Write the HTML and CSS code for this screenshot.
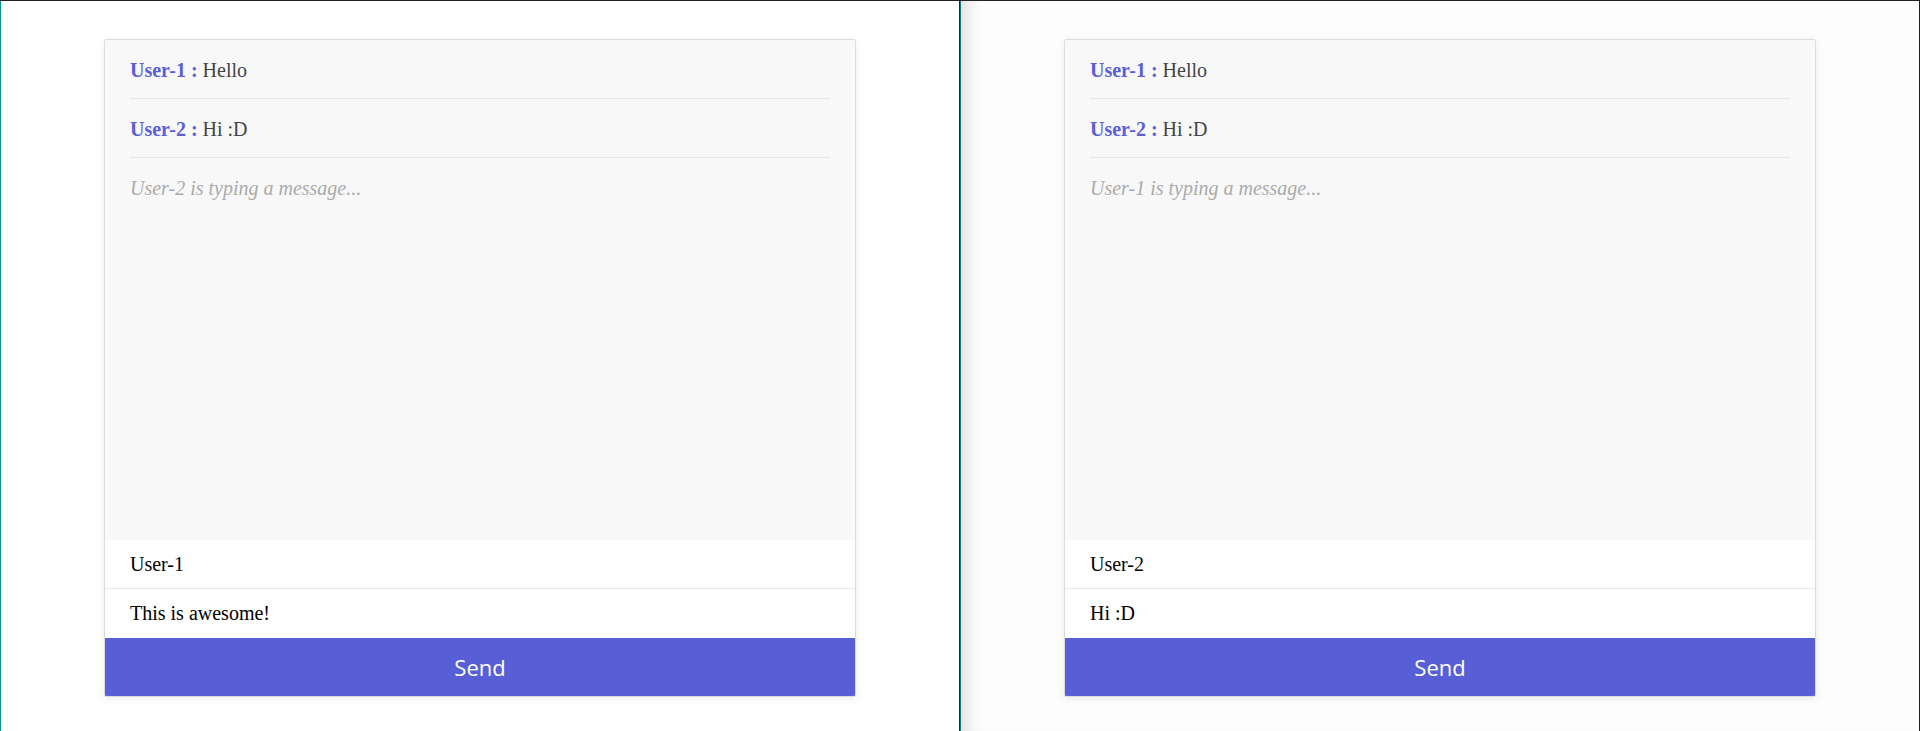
FILE: index.html
```html
<!DOCTYPE html>
<html lang="en">
<head>
<meta charset="utf-8">
<title>Chat</title>
<link rel="stylesheet" href="styles.css">
</head>
<body>
<div class="screen">
  <section class="pane pane-left">
    <div class="card">
      <div class="messages">
        <p class="msg"><strong class="who">User-1 :</strong> Hello</p>
        <p class="msg"><strong class="who">User-2 :</strong> Hi :D</p>
        <p class="typing">User-2 is typing a message...</p>
      </div>
      <input class="field field-name" type="text" value="User-1">
      <input class="field" type="text" value="This is awesome!">
      <button class="send" type="button">Send</button>
    </div>
  </section>
  <section class="pane pane-right">
    <div class="card">
      <div class="messages">
        <p class="msg"><strong class="who">User-1 :</strong> Hello</p>
        <p class="msg"><strong class="who">User-2 :</strong> Hi :D</p>
        <p class="typing">User-1 is typing a message...</p>
      </div>
      <input class="field field-name" type="text" value="User-2">
      <input class="field" type="text" value="Hi :D">
      <button class="send" type="button">Send</button>
    </div>
  </section>
</div>
</body>
</html>
```
FILE: styles.css
```css
* { box-sizing: border-box; }

html, body {
  margin: 0;
  padding: 0;
  background: #ffffff;
}

body {
  font-family: "Liberation Serif", "Times New Roman", serif;
  font-size: 20px;
}

.screen {
  display: flex;
  height: 731px;
  border-top: 1px solid #222222;
  overflow: hidden;
}

.pane {
  flex: 0 0 960px;
  padding-top: 38px;
  height: 730px;
}

.pane-left {
  border-left: 1px solid #129494;
  border-right: 1px solid #1f2a2a;
  background: #ffffff;
}

.pane-right {
  border-left: 1px solid #167c80;
  border-right: 1px solid #222222;
  background: #fdfdfd;
  box-shadow: inset 18px 0 16px -12px rgba(0, 0, 0, 0.13);
}

.card {
  width: 752px;
  margin: 0 auto;
  border: 1px solid #dcdcdc;
  border-radius: 2px;
  background: #ffffff;
  box-shadow: 0 2px 8px rgba(0, 0, 0, 0.07);
  display: flex;
  flex-direction: column;
  overflow: hidden;
}

.messages {
  height: 500px;
  background: #f8f8f8;
  padding: 0 25px;
}

.msg,
.typing {
  margin: 0;
  padding: 19px 0 16px;
  line-height: 23px;
}

.msg {
  color: #444444;
  border-bottom: 1px solid #e6e6e6;
}

.who {
  color: #5a5fd8;
  font-weight: bold;
}

.typing {
  color: #aaaaaa;
  font-style: italic;
}

.field {
  display: block;
  width: 100%;
  height: 49px;
  margin: 0;
  border: 0;
  padding: 0 25px;
  font-family: "Liberation Serif", "Times New Roman", serif;
  font-size: 20px;
  color: #000000;
  background: #ffffff;
  outline: none;
}

.field-name {
  border-bottom: 1px solid #e8e8e8;
}

.send {
  display: block;
  width: 100%;
  height: 58px;
  margin: 0;
  border: 0;
  padding: 0;
  background: #585fd6;
  color: #ffffff;
  font-family: "Open Sans", "DejaVu Sans", sans-serif;
  font-size: 22px;
  cursor: pointer;
}
```
